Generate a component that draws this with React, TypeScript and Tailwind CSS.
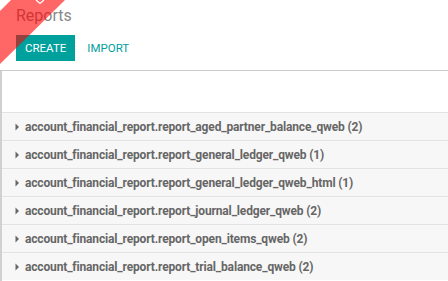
import React from "react";

const rows = [
  "account_financial_report.report_aged_partner_balance_qweb (2)",
  "account_financial_report.report_general_ledger_qweb (1)",
  "account_financial_report.report_general_ledger_qweb_html (1)",
  "account_financial_report.report_journal_ledger_qweb (2)",
  "account_financial_report.report_open_items_qweb (2)",
  "account_financial_report.report_trial_balance_qweb (2)",
];

export default function App() {
  return (
    <div
      className="relative w-[448px] h-[281px] overflow-hidden bg-white"
      style={{ fontFamily: "Roboto, 'Open Sans', sans-serif" }}
    >
      <div className="border-b border-[#cccccc] px-4 pt-[4px] pb-[9px]">
        <div className="h-[24px] leading-[24px] text-[16px] text-[#888888]">Reports</div>
        <div className="mt-[7px] flex items-center">
          <button className="h-[26px] px-[9px] bg-[#00a09d] text-white text-[11.5px] leading-[26px] uppercase">
            CREATE
          </button>
          <button className="ml-[2px] h-[26px] px-[10px] text-[#00a09d] text-[11.5px] leading-[26px] uppercase">
            IMPORT
          </button>
        </div>
      </div>
      <div className="border-l-2 border-[#d0d0d0] h-full">
        <div className="h-[41px]" />
        {rows.map((r) => (
          <div
            key={r}
            className="h-[28px] border-t border-[#e2e2e2] bg-[#f7f7f7] flex items-center pl-[13px] text-[12px] tracking-[-0.15px] font-bold text-[#666666]"
          >
            <svg width="5" height="8" viewBox="0 0 5 8" className="mr-[5px]">
              <path d="M0.5 0.5 L4 4 L0.5 7.5 Z" fill="#666666" />
            </svg>
            <span>{r}</span>
          </div>
        ))}
      </div>
      <svg className="absolute left-0 top-0 pointer-events-none" width="70" height="70" viewBox="0 0 70 70">
        <polygon points="0,11 11,0 65,0 0,64" fill="rgba(255,0,0,0.6)" />
        <path d="M36 0 L40 3.5 L44 0" fill="none" stroke="white" strokeWidth="1.3" />
      </svg>
    </div>
  );
}
